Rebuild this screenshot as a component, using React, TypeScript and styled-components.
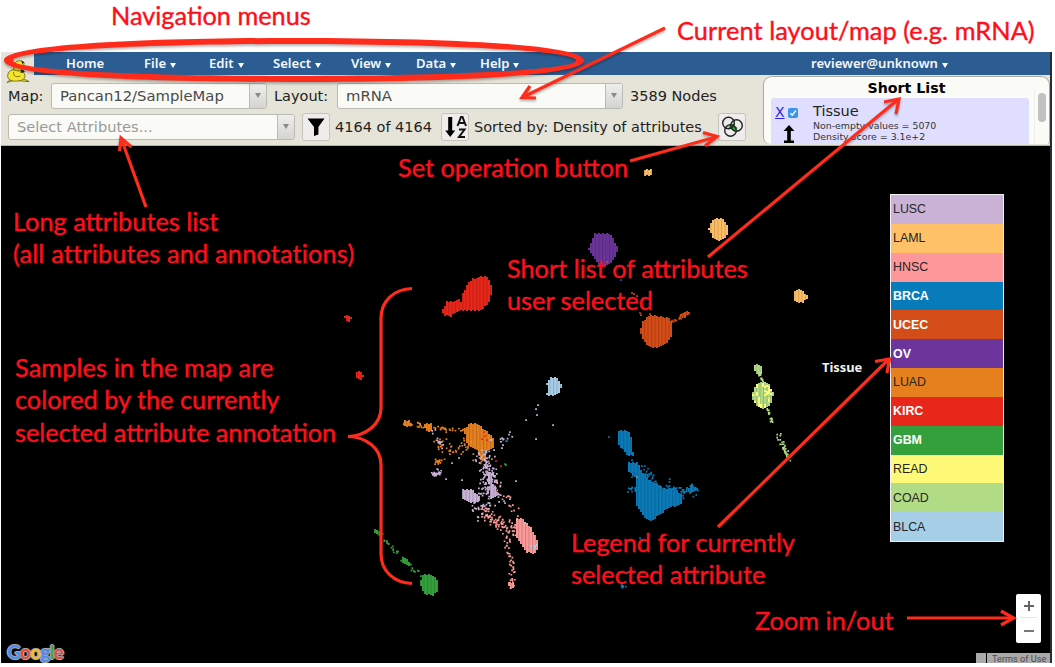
import React from "react";
import styled, { createGlobalStyle } from "styled-components";

const GlobalStyle = createGlobalStyle`
  * { box-sizing: border-box; }
  html, body { margin: 0; padding: 0; background: #fff; overflow: hidden; }
`;

const RED = "#ff2c1b";
const UI = `"DejaVu Sans", sans-serif`;
const MENU = `"Noto Sans", "Open Sans", sans-serif`;

const Page = styled.div`
  position: relative;
  width: 1055px;
  height: 667px;
  padding: 52px 0 0 1px;
  background: #fff;
  font-family: ${UI};
`;
const Frame = styled.div`
  display: flex;
  flex-direction: column;
  width: 1051px;
  height: 611px;
  border-right: 2px solid #252d36;
`;
const Header = styled.header`
  display: flex;
  flex-direction: column;
  height: 94px;
  background: #e6e4d8;
  border-bottom: 1px solid #b5b3a8;
`;
const NavBar = styled.nav`
  display: flex;
  height: 23px;
  margin-left: 33px;
  background: #2c5d92;
`;
const MenuItem = styled.div<{ $w: number; $gap?: number }>`
  display: flex;
  align-items: center;
  gap: 4px;
  width: ${(p) => p.$w}px;
  height: 22px;
  margin-left: ${(p) => p.$gap ?? 0}px;
  color: #f4f7fa;
  font: 600 13.1px/22px ${MENU};
  white-space: nowrap;
`;
const MenuCaret = styled.i`
  width: 0;
  height: 0;
  margin-top: 4px;
  border: 3.5px solid transparent;
  border-top: 5px solid #fff;
  border-bottom: 0;
`;
const Tools = styled.div`
  display: flex;
  justify-content: space-between;
  flex: 1;
`;
const Rows = styled.div`
  display: flex;
  flex-direction: column;
  gap: 2px;
  padding: 6px 0 0 7px;
`;
const Row = styled.div`
  display: flex;
  align-items: center;
  height: 29px;
`;
const Label = styled.span<{ $w: number; $pad?: number }>`
  width: ${(p) => p.$w}px;
  flex: none;
  padding-left: ${(p) => p.$pad ?? 0}px;
  color: #222;
  font-size: 14.5px;
  white-space: nowrap;
`;
const Select = styled.div<{ $w: number; $muted?: boolean }>`
  display: flex;
  justify-content: space-between;
  width: ${(p) => p.$w}px;
  height: 26px;
  flex: none;
  padding-left: 8px;
  overflow: hidden;
  border: 1px solid #b9b9b5;
  border-radius: 3px;
  background: #fafaf6;
  color: ${(p) => (p.$muted ? "#999" : "#4a4a4a")};
  font-size: ${(p) => (p.$muted ? 14.6 : 14.8)}px;
  line-height: 24px;
  white-space: nowrap;
`;
const SelectArrow = styled.span`
  display: flex;
  align-items: center;
  justify-content: center;
  width: 17px;
  border-left: 1px solid #bbb;
  background: linear-gradient(#eeeeec, #d4d4d1);
  &::after {
    content: "";
    border: 3px solid transparent;
    border-top: 5px solid #888;
    border-bottom: 0;
  }
`;
const IconButton = styled.button<{ $ml: number; $mr: number }>`
  display: flex;
  align-items: center;
  justify-content: center;
  width: 28px;
  height: 28px;
  flex: none;
  margin: 0 ${(p) => p.$mr}px 0 ${(p) => p.$ml}px;
  padding: 0;
  border: 1px solid #c5c4c0;
  border-radius: 3px;
  background: #eeedeb;
`;
const ShortList = styled.section`
  display: flex;
  flex-direction: column;
  width: 287px;
  height: 68px;
  margin: 1px 0 0;
  padding: 1px 3px 0 7px;
  border: 1px solid #a9a9a3;
  border-bottom: 0;
  border-radius: 9px 9px 3px 7px;
  background: #fbfbf8;
`;
const ShortTitle = styled.h2`
  margin: 0;
  padding-right: 4px;
  color: #000;
  font: bold 14.2px/20px ${UI};
  text-align: center;
`;
const ShortBody = styled.div`
  display: flex;
  justify-content: space-between;
  flex: 1;
`;
const Entry = styled.div`
  display: flex;
  width: 258px;
  padding: 5px 0 0 4px;
  border-radius: 3px 3px 0 0;
  background: #dfdeff;
`;
const EntryControls = styled.div`
  display: flex;
  flex-wrap: wrap;
  align-content: flex-start;
  column-gap: 3px;
  row-gap: 4px;
  width: 38px;
  height: 40px;
`;
const Remove = styled.a`
  color: #2a25e5;
  font-size: 14px;
  line-height: 18px;
  text-decoration: underline;
`;
const Check = styled.span`
  display: flex;
  width: 10px;
  height: 10px;
  margin-top: 5px;
  border-radius: 2px;
  background: #3b93f0;
`;
const EntryText = styled.div`
  display: flex;
  flex-direction: column;
  color: #333;
  font-size: 9.4px;
  line-height: 11px;
  white-space: nowrap;
`;
const EntryName = styled.strong`
  color: #222;
  font: 14.5px/17px ${UI};
`;
const ScrollTrack = styled.div`
  width: 12px;
  margin-top: -8px;
  padding: 3px 0 0 3px;
  border-left: 1px solid #eeeeea;
`;
const ScrollThumb = styled.div`
  width: 8px;
  height: 29px;
  border-radius: 4px;
  background: #c1c1c1;
`;
const MapArea = styled.main`
  position: relative;
  flex: 1;
  overflow: hidden;
  background: #000;
`;
const MapSvg = styled.svg`
  display: block;
  width: 1049px;
  height: 517px;
`;
const Legend = styled.div`
  position: absolute;
  left: 889px;
  top: 48px;
  display: grid;
  grid-template-rows: repeat(12, 1fr);
  width: 114px;
  height: 348px;
  border: 1px solid #f2eef5;
`;
const LegendRow = styled.div<{ $bg: string; $light?: boolean }>`
  display: flex;
  align-items: center;
  padding-left: 2px;
  background: ${(p) => p.$bg};
  color: ${(p) => (p.$light ? "#fff" : "#252525")};
  font: ${(p) => (p.$light ? "bold" : "normal")} 12.4px "Liberation Sans", sans-serif;
`;
const LegendTitle = styled.div`
  position: absolute;
  left: 821px;
  top: 212px;
  color: #f1f1f1;
  font: 700 12.9px/18px ${MENU};
`;
const ZoomControl = styled.div`
  position: absolute;
  left: 1015px;
  top: 448px;
  display: flex;
  flex-direction: column;
  align-items: center;
  justify-content: space-between;
  width: 25px;
  height: 49px;
  border-radius: 2px;
  background: #fff;
`;
const ZoomKey = styled.div<{ $plus?: boolean }>`
  display: grid;
  place-items: center;
  width: 17px;
  height: 24px;
  border-bottom: ${(p) => (p.$plus ? "1px solid #e6e6e6" : "0")};
`;
const Terms = styled.div`
  position: absolute;
  right: 0;
  bottom: 0;
  display: flex;
  gap: 1px;
  height: 10px;
  color: #4c4c4c;
  font: 9.2px/11px Roboto, sans-serif;
`;
const TermsBlank = styled.span`
  width: 10px;
  background: #aaa;
`;
const TermsText = styled.span`
  width: 63px;
  background: #aaa;
  padding-left: 5px;
  white-space: nowrap;
`;
const Google = styled.div`
  position: absolute;
  left: 6px;
  top: 494px;
  font: 700 19px/24px Lato, sans-serif;
  letter-spacing: -0.7px;
  text-shadow: 1px 0 #a8a8a8, -1px 0 #a8a8a8, 0 1px #a8a8a8, 0 -1px #a8a8a8, 0 0 2px #a8a8a8;
`;
const GoogleLetter = styled.span<{ $c: string }>`
  color: ${(p) => p.$c};
`;
const Overlay = styled.svg`
  position: absolute;
  left: 0;
  top: 0;
  width: 1055px;
  height: 667px;
  filter: drop-shadow(0 2px 1px rgba(0, 0, 0, 0.28));
`;
const Mascot = styled.svg`
  position: absolute;
  left: 6px;
  top: 57px;
  width: 25px;
  height: 27px;
`;
const Note = styled.div<{ $x: number; $y: number }>`
  position: absolute;
  left: ${(p) => p.$x}px;
  top: ${(p) => p.$y}px;
  color: #ff0f1b;
`;
const NoteLine = styled.div<{ $ls: number }>`
  font: 400 25.3px/32.3px Lato, sans-serif;
  letter-spacing: ${(p) => (p.$ls ? `${p.$ls}px` : "normal")};
  white-space: nowrap;
  -webkit-text-stroke: 0.4px #ff0f1b;
`;

/* ---------- sample map ---------- */
type Pt = [number, number];

const C = {
  lusc: "#cab2d6", laml: "#fdbf66", hnsc: "#fb9a99", brca: "#0a7ab8", ucec: "#d44c17", ov: "#6a3499",
  luad: "#e6801f", kirc: "#e8261a", gbm: "#33a03c", read: "#fff978", coad: "#b2db85", blca: "#a6cee6",
};

const rng = (seed: number) => () => {
  seed = (seed * 1664525 + 1013904223) % 4294967296;
  return seed / 4294967296;
};

const inside = (x: number, y: number, poly: Pt[]) => {
  let hit = false;
  for (let i = 0, j = poly.length - 1; i < poly.length; j = i++) {
    const [xi, yi] = poly[i];
    const [xj, yj] = poly[j];
    if (yi > y !== yj > y && x < ((xj - xi) * (y - yi)) / (yj - yi) + xi) hit = !hit;
  }
  return hit;
};

const parse = (s: string): Pt[] => s.split(" ").map((p) => p.split(",").map(Number) as Pt);

function Blob({ pts, color, speck, rate = 0 }: { pts: string; color: string; speck?: string; rate?: number }) {
  const poly = parse(pts);
  const xs = poly.map((p) => p[0]);
  const ys = poly.map((p) => p[1]);
  const rand = rng(Math.round(xs[0] * 31 + ys[0]));
  let main = "";
  let other = "";
  for (let x = Math.floor(Math.min(...xs) / 2) * 2; x < Math.max(...xs); x += 2)
    for (let y = Math.floor(Math.min(...ys) / 2) * 2 - (x % 4 ? 1 : 0); y < Math.max(...ys); y += 2)
      if (inside(x + 1, y + 1, poly)) {
        if (rand() < rate) other += `M${x} ${y}h2v2h-2z`;
        else main += `M${x} ${y}h2v2h-2z`;
      }
  return (
    <g>
      <path d={main} fill={color} />
      {speck && <path d={other} fill={speck} />}
      <path d={main} fill="url(#stripes)" />
    </g>
  );
}

function Trail({ pts, n, spread, color }: { pts: string; n: number; spread: number; color: string }) {
  const line = parse(pts);
  const rand = rng(Math.round(line[0][0] * 17 + line[0][1] * 5 + n));
  let d = "";
  for (let i = 0; i < n; i++) {
    const t = rand() * (line.length - 1);
    const k = Math.floor(t);
    const f = t - k;
    const [a, b] = [line[k], line[k + 1]];
    const x = a[0] + (b[0] - a[0]) * f + (rand() + rand() - 1) * spread;
    const y = a[1] + (b[1] - a[1]) * f + (rand() + rand() - 1) * spread;
    d += `M${x.toFixed(1)} ${y.toFixed(1)}h1.7v1.7h-1.7z`;
  }
  return <path d={d} fill={color} />;
}

function Dots({ at, color }: { at: string; color: string }) {
  return <path d={parse(at).map(([x, y]) => `M${x - 0.8} ${y - 0.8}h1.7v1.7h-1.7z`).join("")} fill={color} />;
}

const SampleMap = () => (
  <MapSvg viewBox="1 146 1049 517">
    <defs>
      <pattern id="stripes" width="3.5" height="4" patternUnits="userSpaceOnUse">
        <rect width="1" height="4" fill="#000" opacity="0.17" />
      </pattern>
    </defs>
    <Blob color={C.laml} pts="643,171 647,169 649,171 653,169 652,175 648,176 644,175" />
    <Blob color={C.laml} pts="712,220 718,218 723,219 729,228 727,236 720,241 713,237 709,229" />
    <Blob color={C.laml} pts="795,292 799,289 803,291 808,297 803,303 798,303 794,299" />
    <Blob color={C.ov} pts="595,234 611,234 618,249 614,260 606,266 598,264 589,249" />
    <Blob color={C.kirc} pts="473,279 481,276 488,277 493,290 488,304 481,311 466,311 460,309 463,302 463,294 468,282" />
    <Blob color={C.kirc} pts="463,303 461,311 455,313 450,317 445,315 442,311 447,302 454,301 459,299" />
    <Blob color={C.kirc} pts="345,317 348,314 352,319 348,322" />
    <Blob color={C.kirc} pts="355,373 360,371 364,375 361,380 357,378" />
    <Blob color={C.ucec} pts="648,317 654,315 669,318 673,322 673,333 667,344 656,348 646,345 640,331 643,322" />
    <Trail color={C.ucec} pts="667,322 675,320 681,316 688,312" n={30} spread={2} />
    <Blob color={C.ucec} pts="681,315 687,310 690,312 685,318" />
    <Dots color={C.ucec} at="632,293 634,294 637,296 640,313 650,314 607,262 641,315" />
    <Dots color={C.ov} at="621,280" />
    <Blob color={C.blca} pts="551,378 558,378 562,386 559,393 555,396 549,393 547,384" />
    <Blob color={C.blca} pts="546,393 550,394 549,396 546,395" />
    <Dots color={C.blca} at="538,405 536,409 537,415 526,420 553,425 536,439 502,438 516,481 502,448 510,499 462,480" />
    <Blob color={C.luad} pts="404,420 411,421 411,427 404,426" />
    <Blob color={C.luad} pts="424,424 433,423 433,431 427,432" />
    <Trail color={C.luad} pts="403,423 417,424 430,426 445,429 465,431" n={56} spread={3} />
    <Blob color={C.luad} speck={C.lusc} rate={0.02} pts="464,430 470,424 478,424 485,430 494,438 494,447 487,451 485,461 480,460 478,450 468,446" />
    <Trail color={C.luad} pts="436,441 446,448 461,446 470,444 487,463" n={62} spread={9} />
    <Trail color={C.luad} pts="435,461 442,458" n={16} spread={4} />
    <Trail color={C.lusc} pts="433,430 437,437 442,446" n={12} spread={3} />
    <Trail color={C.lusc} pts="433,475 438,471" n={24} spread={4} />
    <Trail color={C.lusc} pts="481,454 488,470 491,482 493,494" n={135} spread={10} />
    <Trail color={C.lusc} pts="492,486 482,500 481,510" n={65} spread={14} />
    <Blob color={C.lusc} speck={C.luad} rate={0.03} pts="463,490 472,489 480,498 478,503 469,503 463,499" />
    <Blob color={C.lusc} pts="486,471 492,473 493,484 498,494 491,500 490,487" />
    <Trail color={C.lusc} pts="499,441 511,433" n={9} spread={4} />
    <Dots color={C.lusc} at="446,479 452,463 459,458 504,501 505,503 490,466 494,450 503,445" />
    <Dots color={C.kirc} at="484,432 485,436 482,439 487,440 496,461 501,466" />
    <Dots color={C.brca} at="506,441 507,441 484,452" />
    <Dots color={C.gbm} at="505,464 506,465" />
    <Trail color={C.hnsc} pts="481,509 493,520 507,526 519,532" n={95} spread={8} />
    <Blob color={C.hnsc} speck={C.blca} rate={0.04} pts="515,518 523,519 532,529 539,545 536,554 526,552 516,536" />
    <Trail color={C.hnsc} pts="505,533 509,556 512,573 511,586" n={44} spread={4} />
    <Blob color={C.hnsc} pts="508,581 514,583 514,587 510,590" />
    <Trail color={C.hnsc} pts="496,478 510,506 522,520" n={16} spread={6} />
    <Trail color={C.gbm} pts="378,532 389,545 402,558 412,568 421,576" n={42} spread={3} />
    <Blob color={C.gbm} pts="401,556 408,560 411,568 403,563" />
    <Blob color={C.gbm} pts="375,529 380,532 379,535 375,532" />
    <Blob color={C.gbm} pts="423,575 432,574 439,582 438,591 432,596 424,593 420,584" />
    <Blob color={C.brca} pts="619,431 629,431 633,442 632,449 635,456 628,456 624,450 617,444" />
    <Blob color={C.brca} pts="629,463 637,462 642,471 650,481 663,488 676,489 683,496 681,504 667,509 658,516 652,522 645,517 636,504 636,478 629,471" />
    <Trail color={C.brca} pts="643,468 653,481 669,488 681,492 690,489 697,490" n={85} spread={7} />
    <Trail color={C.brca} pts="626,489 637,488" n={16} spread={3} />
    <Blob color={C.brca} pts="687,488 695,486 698,489 694,493 688,491" />
    <Dots color={C.brca} at="609,437 632,460 632,477 640,538 627,573" />
    <Trail color={C.brca} pts="620,585 624,586" n={7} spread={2} />
    <Dots color={C.luad} at="637,477" />
    <Dots color={C.ov} at="635,473" />
    <Blob color={C.coad} pts="754,364 763,366 762,375 756,374 754,369" />
    <Trail color={C.coad} pts="758,371 761,380 762,387" n={22} spread={2} />
    <Blob color={C.coad} speck={C.read} rate={0.35} pts="758,382 768,383 774,394 770,405 763,410 756,406 751,395" />
    <Trail color={C.coad} pts="766,408 772,422" n={16} spread={2} />
    <Trail color={C.coad} pts="778,435 784,449 788,459" n={34} spread={3} />
  </MapSvg>
);

const Arrow = ({ line, head }: { line: string; head: string }) => (
  <>
    <polyline points={line} />
    <polyline points={head} />
  </>
);

const LEGEND: { name: string; bg: string; light?: boolean }[] = [
  { name: "LUSC", bg: C.lusc }, { name: "LAML", bg: "#fec168" }, { name: "HNSC", bg: "#fd979a" },
  { name: "BRCA", bg: "#087cba", light: true }, { name: "UCEC", bg: C.ucec, light: true },
  { name: "OV", bg: "#6b359b", light: true }, { name: "LUAD", bg: C.luad },
  { name: "KIRC", bg: C.kirc, light: true }, { name: "GBM", bg: C.gbm, light: true },
  { name: "READ", bg: C.read }, { name: "COAD", bg: C.coad }, { name: "BLCA", bg: C.blca },
];

const MENUS = [
  { name: "File", w: 65 }, { name: "Edit", w: 64 }, { name: "Select", w: 78 },
  { name: "View", w: 65 }, { name: "Data", w: 64 }, { name: "Help", w: 70 },
];

const NOTES: { x: number; y: number; lines: [string, number][] }[] = [
  { x: 111, y: -1, lines: [["Navigation menus", 0]] },
  { x: 677, y: 14, lines: [["Current layout/map (e.g. mRNA)", 0.08]] },
  { x: 398, y: 151, lines: [["Set operation button", 0]] },
  { x: 507, y: 252, lines: [["Short list of attributes", 0], ["user selected", 0]] },
  { x: 13, y: 205, lines: [["Long attributes list", 0], ["(all attributes and annotations)", 0.18]] },
  { x: 15, y: 351, lines: [["Samples in the map are", 0.1], ["colored by the currently", 0], ["selected attribute annotation", 0]] },
  { x: 571, y: 526, lines: [["Legend for currently", 0], ["selected attribute", 0]] },
  { x: 755, y: 604, lines: [["Zoom in/out", 0]] },
];

const GOOGLE: [string, string][] = [
  ["G", "#4a8af4"], ["o", "#e34a3b"], ["o", "#f4b92a"], ["g", "#4a8af4"], ["l", "#35a355"], ["e", "#e34a3b"],
];

export default function App() {
  return (
    <Page>
      <GlobalStyle />
      <Frame>
        <Header>
          <NavBar>
            <MenuItem $w={78} $gap={32}>Home</MenuItem>
            {MENUS.map((m) => (
              <MenuItem key={m.name} $w={m.w}>{m.name}<MenuCaret /></MenuItem>
            ))}
            <MenuItem $w={150} $gap={261}>reviewer@unknown<MenuCaret /></MenuItem>
          </NavBar>
          <Tools>
            <Rows>
              <Row>
                <Label $w={43}>Map:</Label>
                <Select $w={216}>Pancan12/SampleMap<SelectArrow /></Select>
                <Label $w={70} $pad={7}>Layout:</Label>
                <Select $w={286}>mRNA<SelectArrow /></Select>
                <Label $w={94} $pad={7}>3589 Nodes</Label>
              </Row>
              <Row>
                <Select $w={287} $muted>Select Attributes...<SelectArrow /></Select>
                <IconButton $ml={7} $mr={5}>
                  <svg width="20" height="20" viewBox="0 0 20 20"><path d="M1.5 1.5h17L12.4 10v7.5L8 19v-9z" /></svg>
                </IconButton>
                <Label $w={99}>4164 of 4164</Label>
                <IconButton $ml={7} $mr={5}>
                  <svg width="24" height="24" viewBox="0 0 24 24">
                    <path d="M5.2 2h4v13.500h3L7.200 22 2.200 15.500h3z" />
                    <path d="M14.500 11 18 2h1.500L23 11M16 8h5.500M16 14.500h5.500L16 22h6" fill="none" stroke="#111" strokeWidth="2" />
                  </svg>
                </IconButton>
                <Label $w={231}>Sorted by: Density of attributes</Label>
                <IconButton $ml={13} $mr={0}>
                  <svg width="24" height="24" viewBox="0 0 24 24">
                    <path d="M8 12l4-3 3-1v3l3 2-4 3-3-2z" fill="#2fae3c" />
                    <g fill="none" stroke="#222" strokeWidth="1.4">
                      <circle cx="8.500" cy="8" r="5.800" /><circle cx="16.500" cy="10.500" r="5.800" /><circle cx="10.500" cy="15.500" r="5.800" />
                    </g>
                  </svg>
                </IconButton>
              </Row>
            </Rows>
            <ShortList>
              <ShortTitle>Short List</ShortTitle>
              <ShortBody>
                <Entry>
                  <EntryControls>
                    <Remove>X</Remove>
                    <Check>
                      <svg width="10" height="10" viewBox="0 0 10 10"><path d="M2.300 5.200 4.300 7.200 7.800 2.500" fill="none" stroke="#fff" strokeWidth="1.400" /></svg>
                    </Check>
                    <svg width="28" height="19" viewBox="0 0 28 19"><path d="M14 0l5.500 6h-3.700v9.500H19V18H9v-2.500h3.200V6H8.500z" /></svg>
                  </EntryControls>
                  <EntryText>
                    <EntryName>Tissue</EntryName>
                    <span>Non-empty values = 5070</span>
                    <span>Density score = 3.1e+2</span>
                  </EntryText>
                </Entry>
                <ScrollTrack><ScrollThumb /></ScrollTrack>
              </ShortBody>
            </ShortList>
          </Tools>
        </Header>
        <MapArea>
          <SampleMap />
          <LegendTitle>Tissue</LegendTitle>
          <Legend>
            {LEGEND.map((l) => (
              <LegendRow key={l.name} $bg={l.bg} $light={l.light}>{l.name}</LegendRow>
            ))}
          </Legend>
          <ZoomControl>
            <ZoomKey $plus>
              <svg width="10" height="10" viewBox="0 0 10 10"><path d="M0 5h10M5 0v10" stroke="#666" strokeWidth="2" /></svg>
            </ZoomKey>
            <ZoomKey>
              <svg width="10" height="10" viewBox="0 0 10 10"><path d="M0 5h10" stroke="#777" strokeWidth="2" /></svg>
            </ZoomKey>
          </ZoomControl>
          <Google>
            {GOOGLE.map(([ch, c], i) => <GoogleLetter key={i} $c={c}>{ch}</GoogleLetter>)}
          </Google>
          <Terms><TermsBlank /><TermsText>Terms of Use</TermsText></Terms>
        </MapArea>
      </Frame>
      <Mascot viewBox="0 0 26 27">
        <g fill="#f3e52b" stroke="#5a5410" strokeWidth="0.8">
          <path d="M1 26c4-1 7-3 11-2 4 0 7 1 12 1l-6-3H6z" />
          <path d="M9 6c3-4 9-3 10 0l-1 3 1 3c-2 4-5 6-9 5-3-2-2-6-1-11z" />
          <path d="M3 15C-1 22 5 25 11 24.500c8 0 11-5 7-9-2-3-5-1-7-2-3-1-6-1-8 1.500z" />
          <path d="M8 15c-1 5 4 6 7 4" fill="none" />
        </g>
        <path d="M16 3l3 2-2 2M16 12l4 3-5 1" fill="#222" />
      </Mascot>
      <Overlay viewBox="0 0 1055 667" fill="none" stroke={RED} strokeWidth="3.200">
        <path fill={RED} stroke="none" fillRule="evenodd" d="M4 60.500C4 45 135 38 294 38S584 45 584 60.500 453 82 294 82 4 76 4 60.500ZM13 60.500C13 70 140 76 294 76S576 70 576 60.500 448 44 294 44 13 51 13 60.500Z" />
        <path d="M412 288.500C394 289 381 301 381 318V408C381 424 366 436 348 436.500C366 437 381 448 381 465V554C381 571 394 583 412 583.500" />
        <Arrow line="665,28 522,97.500" head="530,86 522,97.500 536,98" />
        <Arrow line="630,161 716,137" head="703,132.500 717,136.500 705,146" />
        <Arrow line="146,207 121,138" head="119.500,151 121,138 131.500,147" />
        <Arrow line="708,257 898,99.500" head="884,102 899,99 896,114" />
        <Arrow line="718,527 889,359" head="875,361.500 889.500,359 887,373" />
        <Arrow line="907,618 1013,618" head="1001,611 1013.500,618 1001,625" />
      </Overlay>
      {NOTES.map((n) => (
        <Note key={n.lines[0][0]} $x={n.x} $y={n.y}>
          {n.lines.map(([t, ls]) => <NoteLine key={t} $ls={ls}>{t}</NoteLine>)}
        </Note>
      ))}
    </Page>
  );
}
